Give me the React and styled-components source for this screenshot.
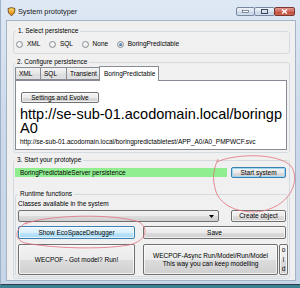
import React from 'react';
import styled, { createGlobalStyle } from 'styled-components';

const GlobalStyle = createGlobalStyle`
  html, body {
    margin: 0;
    padding: 0;
    background: #3a8292;
  }
  body {
    font-family: "Liberation Sans", Arial, sans-serif;
    font-size: 6.5px;
    color: #000;
  }
`;

const Window = styled.div`
  position: relative;
  width: 300px;
  height: 285px;
  box-sizing: border-box;
  display: flex;
  flex-direction: column;
  background: linear-gradient(#dfe9f5, #ccdaeb 40%, #c6d5e7);
  border-left: 1px solid #9fb2c8;
  border-bottom: 1px solid #2c3c48;
`;

const TitleBar = styled.div`
  height: 20px;
  display: flex;
  align-items: flex-start;
  padding-top: 7px;
  box-sizing: border-box;
`;

const TitleIcon = styled.svg`
  width: 9px;
  height: 9px;
  margin-left: 6px;
  flex: none;
`;

const Title = styled.span`
  margin-left: 2px;
  font-size: 7.3px;
  line-height: 9px;
  color: #1a1a1a;
`;

const Caption = styled.div`
  margin-left: auto;
  margin-right: 5px;
  display: flex;
`;

const CaptionButton = styled.div`
  width: ${p => p.$w}px;
  height: 9px;
  box-sizing: border-box;
  display: flex;
  align-items: center;
  justify-content: center;
  border: 1px solid ${p => (p.$close ? '#7b3630' : '#7788a0')};
  border-radius: 2px;
  margin-left: -1px;
  background: ${p =>
    p.$close
      ? 'linear-gradient(#e29a90, #d0685c 50%, #c04535 51%, #cc6a58)'
      : 'linear-gradient(#eef3f9, #d9e3ef 50%, #c5d4e6 51%, #d3dfec)'};
`;

const Client = styled.div`
  flex: 1;
  margin: 0 4px 3px 5px;
  background: #f0f0f0;
  border: 1px solid #a4b4c6;
  padding: 0 5px 0 6px;
  display: flex;
  flex-direction: column;
`;

const Group = styled.fieldset`
  margin: ${p => p.$mt}px 0 0;
  padding: ${p => p.$pad};
  border: 1px solid #d3dbe1;
  border-radius: 3px;
  min-width: 0;
`;

const Legend = styled.legend`
  padding: 0 2px;
  line-height: 8px;
  font-size: 6.5px;
`;

const RadioRow = styled.div`
  display: flex;
  align-items: center;
  gap: 8.6px;
  height: 8px;
`;

const RadioItem = styled.label`
  display: flex;
  align-items: center;
  gap: 4px;
  line-height: 8px;
`;

const RadioDot = styled.span`
  width: 7px;
  height: 7px;
  box-sizing: border-box;
  border-radius: 50%;
  border: 1px solid #8c8f92;
  background: radial-gradient(circle at 40% 35%, #ffffff, #e2e4e6 70%, #cfd2d5);
  display: flex;
  align-items: center;
  justify-content: center;

  &::after {
    content: '';
    width: 3px;
    height: 3px;
    border-radius: 50%;
    background: ${p => (p.$checked ? 'radial-gradient(circle at 35% 35%, #6fa4d8, #1b4f8c)' : 'transparent')};
  }
`;

const TabStrip = styled.div`
  display: flex;
  align-items: flex-end;
  height: 14px;
  padding-left: 1px;
`;

const Tab = styled.div`
  position: relative;
  width: ${p => p.$w}px;
  height: ${p => (p.$active ? 15 : 13)}px;
  margin-bottom: ${p => (p.$active ? -1 : 0)}px;
  margin-left: -1px;
  box-sizing: border-box;
  border: 1px solid #898c95;
  border-bottom: ${p => (p.$active ? 'none' : '1px solid #898c95')};
  background: ${p => (p.$active ? '#fff' : 'linear-gradient(#f3f3f3, #e6e6e6 50%, #dcdcdc 51%, #e0e0e0)')};
  padding-left: ${p => (p.$active ? 4 : 3)}px;
  line-height: ${p => (p.$active ? 13 : 11)}px;
  white-space: nowrap;
  overflow: hidden;
`;

const TabPanel = styled.div`
  height: 70px;
  box-sizing: border-box;
  background: #fff;
  border: 1px solid #898c95;
  padding: 11px 1px 0 4px;
  overflow: hidden;
`;

const Button = styled.button`
  font-family: inherit;
  font-size: 6.5px;
  color: #000;
  width: ${p => (p.$w ? `${p.$w}px` : 'auto')};
  height: ${p => p.$h}px;
  flex: ${p => (p.$grow ? 1 : 'none')};
  margin: 0 0 0 ${p => p.$ml || 0}px;
  padding: 0;
  box-sizing: border-box;
  border-radius: 2px;
  border: 1px solid ${p => (p.$tone === 'plain' ? '#707070' : '#3c7fb1')};
  background: ${p =>
    p.$tone === 'hover'
      ? 'linear-gradient(#eaf6fd, #d9f0fc 50%, #bee6fd 51%, #a7d9f5)'
      : 'linear-gradient(#f2f2f2, #ebebeb 50%, #dddddd 51%, #cfcfcf)'};
  box-shadow: inset 0 0 0 1px ${p => (p.$tone === 'focus' ? '#9fd6f4' : 'rgba(255,255,255,0.7)')};
  line-height: 8px;
`;

const BigUrl = styled.div`
  font-size: 14.5px;
  line-height: 14px;
  white-space: nowrap;
  margin-top: ${p => p.$mt || 0}px;
`;

const SmallUrl = styled.div`
  margin-top: 3px;
  line-height: 8px;
  white-space: nowrap;
`;

const StartRow = styled.div`
  display: flex;
  align-items: center;
  gap: 4px;
  margin-top: 3px;
  padding-right: 2px;
`;

const StatusBar = styled.div`
  flex: 1;
  height: 9px;
  background: #90ee90;
  padding-left: 5px;
  line-height: 9px;
`;

const Caption2 = styled.div`
  line-height: 8px;
  margin-top: 2px;
`;

const Row = styled.div`
  display: flex;
  align-items: stretch;
  gap: ${p => p.$gap}px;
  margin-top: ${p => p.$mt}px;
`;

const Combo = styled.div`
  flex: 1;
  height: 12px;
  box-sizing: border-box;
  border: 1px solid #707070;
  border-radius: 2px;
  background: linear-gradient(#f2f2f2, #ebebeb 50%, #dddddd 51%, #cfcfcf);
  display: flex;
  align-items: center;
  justify-content: flex-end;
  padding-right: 4px;
`;

const OldButton = styled(Button)`
  display: flex;
  flex-direction: column;
  align-items: center;
  justify-content: center;
  line-height: 9.5px;
  margin-right: -2px;
`;

const Annotation = styled.svg`
  position: absolute;
  left: 0;
  top: 0;
  width: 300px;
  height: 288px;
  pointer-events: none;
`;

const radios = ['XML', 'SQL', 'None', 'BoringPredictable'];
const tabs = [
  { label: 'XML', w: 26 },
  { label: 'SQL', w: 27 },
  { label: 'Transient', w: 34 },
  { label: 'BoringPredictable', w: 60, active: true },
];

export default function App() {
  return (
    <>
      <GlobalStyle />
      <Window>
        <TitleBar>
          <TitleIcon viewBox="0 0 9 9">
            <defs>
              <linearGradient id="ic" x1="0" y1="0" x2="0" y2="1">
                <stop offset="0" stopColor="#ffe066" />
                <stop offset="1" stopColor="#e07a10" />
              </linearGradient>
            </defs>
            <path d="M1 1.5 L4.5 0.6 L8 1.5 L7.6 5 C7 7 5.5 8 4.5 8.5 C3.5 8 2 7 1.4 5 Z" fill="url(#ic)" stroke="#5a3a10" strokeWidth="0.8" />
          </TitleIcon>
          <Title>System prototyper</Title>
          <Caption>
            <CaptionButton $w={19}>
              <svg width="7" height="3" viewBox="0 0 7 3"><rect x="0.5" y="0.5" width="6" height="2" fill="#fff" stroke="#3c4c60" strokeWidth="0.6" /></svg>
            </CaptionButton>
            <CaptionButton $w={21}>
              <svg width="7" height="5" viewBox="0 0 7 5"><rect x="0.5" y="0.5" width="6" height="4" fill="none" stroke="#3c4c60" strokeWidth="1" /></svg>
            </CaptionButton>
            <CaptionButton $w={21} $close>
              <svg width="7" height="5" viewBox="0 0 7 5"><path d="M1 0.5 L6 4.5 M6 0.5 L1 4.5" stroke="#fff" strokeWidth="1.4" /></svg>
            </CaptionButton>
          </Caption>
        </TitleBar>

        <Client>
          <Group $mt={6} $pad="5px 2px 5px 2px">
            <Legend>1. Select persistence</Legend>
            <RadioRow>
              {radios.map(r => (
                <RadioItem key={r}>
                  <RadioDot $checked={r === 'BoringPredictable'} />
                  {r}
                </RadioItem>
              ))}
            </RadioRow>
          </Group>

          <Group $mt={4} $pad="0 2px 2px 1px">
            <Legend>2. Configure persistence</Legend>
            <TabStrip>
              {tabs.map(t => (
                <Tab key={t.label} $w={t.w} $active={t.active}>{t.label}</Tab>
              ))}
            </TabStrip>
            <TabPanel>
              <Button $tone="plain" $w={78} $h={11} $ml={1}>Settings and Evolve</Button>
              <BigUrl $mt={4}>http://se-sub-01.acodomain.local/boringp</BigUrl>
              <BigUrl>A0</BigUrl>
              <SmallUrl>http://se-sub-01.acodomain.local/boringpredictabletest/APP_A0/A0_PMPWCF.svc</SmallUrl>
            </TabPanel>
          </Group>

          <Group $mt={3} $pad="0 1px 1px 1px">
            <Legend>3. Start your prototype</Legend>
            <StartRow>
              <StatusBar>BoringPredictableServer persistence</StatusBar>
              <Button $tone="focus" $w={55} $h={11}>Start system</Button>
            </StartRow>

            <Group $mt={12} $pad="0 1px 1px 2px">
              <Legend>Runtime functions</Legend>
              <Caption2>Classes available in the system</Caption2>
              <Row $gap={12} $mt={2}>
                <Combo>
                  <svg width="5" height="3" viewBox="0 0 5 3"><path d="M0 0 H5 L2.5 3 Z" fill="#000" /></svg>
                </Combo>
                <Button $tone="plain" $w={55} $h={12}>Create object</Button>
              </Row>
              <Row $gap={8} $mt={4}>
                <Button $tone="hover" $w={117} $h={13}>Show EcoSpaceDebugger</Button>
                <Button $tone="plain" $grow $h={13}>Save</Button>
              </Row>
              <Row $gap={1} $mt={5}>
                <Button $tone="plain" $w={117} $h={31} style={{ marginRight: 7 }}>WECPOF - Got model? Run!</Button>
                <Button $tone="plain" $grow $h={31}>
                  WECPOF-Async Run/Model/Run/Model
                  <br />
                  This way you can keep modelling
                </Button>
                <OldButton $tone="plain" $w={9} $h={31}>
                  <span>o</span>
                  <span>l</span>
                  <span>d</span>
                </OldButton>
              </Row>
            </Group>
          </Group>
        </Client>

        <Annotation viewBox="0 0 300 288">
          <path
            d="M216 162 C232 154 276 152 290 166 C299 178 292 204 262 211 C238 215 217 205 214 188 C211 177 213 168 217 159"
            fill="none"
            stroke="#e2707c"
            strokeWidth="0.8"
          />
          <path
            d="M24 224 C44 215 112 213 138 222 C148 228 146 241 128 245 C98 250 50 248 24 243 C12 239 14 229 26 222"
            fill="none"
            stroke="#e2707c"
            strokeWidth="0.8"
          />
        </Annotation>
      </Window>
    </>
  );
}
